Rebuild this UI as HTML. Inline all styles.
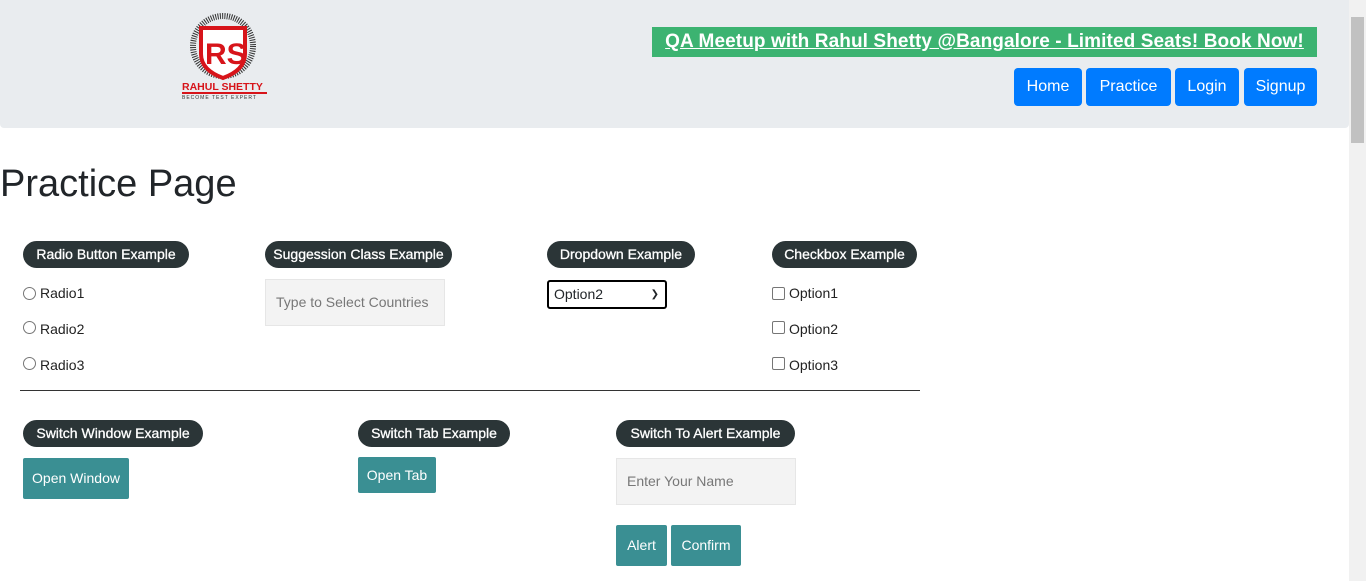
<!DOCTYPE html>
<html><head><style>
*{box-sizing:border-box;margin:0;padding:0}
body{width:1366px;height:581px;overflow:hidden;background:#fff;font-family:"Liberation Sans",sans-serif;color:#212529;position:relative}
.abs{position:absolute}
.hdr{left:0;top:0;width:1349px;height:128px;background:#e9ecef;border-radius:0 0 4px 4px}
.banner{left:652px;top:27px;width:665px;height:30px;background:#3cb371;color:#fff;font-weight:bold;font-size:19px;text-decoration:underline;text-align:center;line-height:30px;letter-spacing:0.1px}
.nb{top:68px;height:38px;background:#007bff;color:#fff;font-size:16px;line-height:38px;text-align:center;border-radius:4px}
.pill{height:27px;background:#2b3537;color:#fff;font-size:14px;line-height:27px;text-align:center;border-radius:14px;-webkit-text-stroke:0.3px #fff}
.lbl{font-size:14px;color:#222}
.rad{width:13px;height:13px;border:1px solid #767676;border-radius:50%}
.chk{width:13px;height:13px;border:1px solid #767676;border-radius:2px}
.inp{background:#f3f3f3;border:1px solid #e6e6e6;font-size:14px;color:#777;padding-left:10px}
.btn{background:#3a8f93;color:#fff;font-size:14px;text-align:center;border-radius:2px}
</style></head><body>
<div class="abs hdr"></div>
<svg class="abs" style="left:180px;top:12px" width="90" height="90" viewBox="0 0 90 90">
<circle cx="43" cy="34" r="30" fill="none" stroke="#333" stroke-width="6" stroke-dasharray="1 1.3"/>
<path d="M21 16 H65 V42 Q65 58 43 66 Q21 58 21 42Z" fill="#fff" stroke="#d7141a" stroke-width="4"/>
<text x="25" y="52" font-family="Liberation Sans" font-weight="bold" font-size="30" fill="#d7141a">RS</text>
<text x="2" y="78" font-family="Liberation Sans" font-weight="bold" font-size="10.5" fill="#d7141a">RAHUL SHETTY</text>
<rect x="2" y="80" width="85" height="2" fill="#d7141a"/>
<text x="2" y="87" font-family="Liberation Sans" font-size="5" fill="#333" letter-spacing="1">BECOME TEST EXPERT</text>
</svg>
<div class="abs banner">QA Meetup with Rahul Shetty @Bangalore - Limited Seats! Book Now!</div>
<div class="abs nb" style="left:1014px;width:68px">Home</div>
<div class="abs nb" style="left:1086px;width:85px">Practice</div>
<div class="abs nb" style="left:1175px;width:64px">Login</div>
<div class="abs nb" style="left:1244px;width:73px">Signup</div>
<div class="abs" style="left:1349px;top:0;width:17px;height:581px;background:#f1f1f1"></div>
<div class="abs" style="left:1351px;top:17px;width:13px;height:126px;background:#c1c1c1"></div>
<div class="abs" style="left:0;top:161px;font-size:38px;line-height:46px">Practice Page</div>

<div class="abs pill" style="left:23px;top:241px;width:166px">Radio Button Example</div>
<div class="abs pill" style="left:265px;top:241px;width:187px">Suggession Class Example</div>
<div class="abs pill" style="left:547px;top:241px;width:148px">Dropdown Example</div>
<div class="abs pill" style="left:772px;top:241px;width:145px">Checkbox Example</div>

<div class="abs rad" style="left:23px;top:287px"></div><div class="abs lbl" style="left:40px;top:285px">Radio1</div>
<div class="abs rad" style="left:23px;top:321px"></div><div class="abs lbl" style="left:40px;top:321px">Radio2</div>
<div class="abs rad" style="left:23px;top:357px"></div><div class="abs lbl" style="left:40px;top:357px">Radio3</div>

<div class="abs inp" style="left:265px;top:279px;width:180px;height:47px;line-height:45px">Type to Select Countries</div>

<div class="abs" style="left:547px;top:280px;width:120px;height:29px;border:2px solid #000;border-radius:3px;font-size:14px;line-height:25px;padding-left:5px">Option2<span style="position:absolute;right:6px;top:0;font-size:10px">&#10095;</span></div>

<div class="abs chk" style="left:772px;top:287px"></div><div class="abs lbl" style="left:789px;top:285px">Option1</div>
<div class="abs chk" style="left:772px;top:321px"></div><div class="abs lbl" style="left:789px;top:321px">Option2</div>
<div class="abs chk" style="left:772px;top:357px"></div><div class="abs lbl" style="left:789px;top:357px">Option3</div>

<div class="abs" style="left:20px;top:390px;width:900px;height:1px;background:#333"></div>

<div class="abs pill" style="left:23px;top:420px;width:180px">Switch Window Example</div>
<div class="abs pill" style="left:358px;top:420px;width:152px">Switch Tab Example</div>
<div class="abs pill" style="left:616px;top:420px;width:179px">Switch To Alert Example</div>

<div class="abs btn" style="left:23px;top:458px;width:106px;height:41px;line-height:41px">Open Window</div>
<div class="abs btn" style="left:358px;top:457px;width:78px;height:36px;line-height:36px">Open Tab</div>
<div class="abs inp" style="left:616px;top:458px;width:180px;height:47px;line-height:45px">Enter Your Name</div>
<div class="abs btn" style="left:616px;top:525px;width:51px;height:41px;line-height:41px">Alert</div>
<div class="abs btn" style="left:671px;top:525px;width:70px;height:41px;line-height:41px">Confirm</div>
</body></html>
